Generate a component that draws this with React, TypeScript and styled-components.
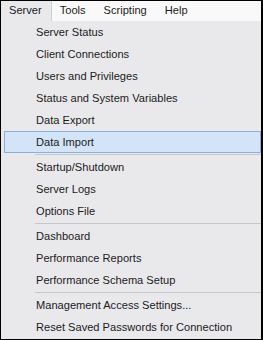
import React from 'react';
import styled, { createGlobalStyle } from 'styled-components';

const Global = createGlobalStyle`
  html, body { margin: 0; padding: 0; background: #ffffff; }
  body { font-family: "Liberation Sans", Arial, sans-serif; }
`;

const Frame = styled.div`
  width: 263px;
  height: 340px;
  box-sizing: border-box;
  border: 1px solid #000;
  border-right-width: 2px;
  background: #e9e9ec;
  display: flex;
  flex-direction: column;
  font-size: 11.1px;
  color: #1b1b1b;
  overflow: hidden;
`;

const MenuBar = styled.div`
  height: 20px;
  display: flex;
  background: #f9f9f9;
  flex-shrink: 0;
`;

const BarItem = styled.div<{ $open?: boolean }>`
  padding: 0 9px 0 8px;
  line-height: 18px;
  box-sizing: border-box;
  background: ${(p) => (p.$open ? '#e9e9ec' : 'transparent')};
  border-right: 1px solid ${(p) => (p.$open ? '#cccedb' : 'transparent')};
  white-space: nowrap;
`;

const Dropdown = styled.div`
  display: flex;
  flex-direction: column;
`;

const Item = styled.div<{ $active?: boolean }>`
  height: 22px;
  line-height: 20px;
  box-sizing: border-box;
  margin-left: 3px;
  padding-left: 31px;
  border: 1px solid ${(p) => (p.$active ? '#86aedf' : 'transparent')};
  background: ${(p) => (p.$active ? '#d3e4f6' : 'transparent')};
  white-space: nowrap;
`;

const Separator = styled.div`
  height: 3px;
  margin-left: 34px;
  display: flex;
  align-items: center;
  &::after {
    content: '';
    flex: 1;
    height: 1px;
    background: #c6c6cb;
  }
`;

type Entry = { label: string; active?: boolean } | 'sep';

const entries: Entry[] = [
  { label: 'Server Status' },
  { label: 'Client Connections' },
  { label: 'Users and Privileges' },
  { label: 'Status and System Variables' },
  { label: 'Data Export' },
  { label: 'Data Import', active: true },
  'sep',
  { label: 'Startup/Shutdown' },
  { label: 'Server Logs' },
  { label: 'Options File' },
  'sep',
  { label: 'Dashboard' },
  { label: 'Performance Reports' },
  { label: 'Performance Schema Setup' },
  'sep',
  { label: 'Management Access Settings...' },
  { label: 'Reset Saved Passwords for Connection' },
];

export default function App() {
  return (
    <>
      <Global />
      <Frame>
        <MenuBar>
          <BarItem $open>Server</BarItem>
          <BarItem>Tools</BarItem>
          <BarItem>Scripting</BarItem>
          <BarItem>Help</BarItem>
        </MenuBar>
        <Dropdown>
          {entries.map((e, i) =>
            e === 'sep' ? (
              <Separator key={i} />
            ) : (
              <Item key={i} $active={e.active}>
                {e.label}
              </Item>
            )
          )}
        </Dropdown>
      </Frame>
    </>
  );
}
